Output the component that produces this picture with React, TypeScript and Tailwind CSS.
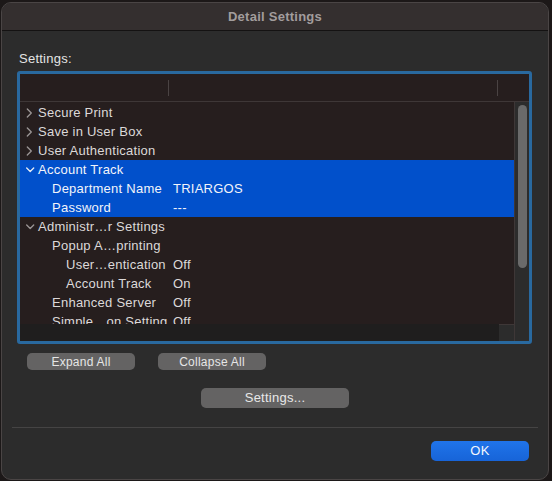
import React from "react";

type Row = {
  level: 0 | 1 | 2;
  label: string;
  value?: string;
  chev?: "right" | "down";
  sel?: boolean;
};

const rows: Row[] = [
  { level: 0, label: "Secure Print", chev: "right" },
  { level: 0, label: "Save in User Box", chev: "right" },
  { level: 0, label: "User Authentication", chev: "right" },
  { level: 0, label: "Account Track", chev: "down", sel: true },
  { level: 1, label: "Department Name", value: "TRIARGOS", sel: true },
  { level: 1, label: "Password", value: "---", sel: true },
  { level: 0, label: "Administr…r Settings", chev: "down" },
  { level: 1, label: "Popup A…printing" },
  { level: 2, label: "User…entication", value: "Off" },
  { level: 2, label: "Account Track", value: "On" },
  { level: 1, label: "Enhanced Server", value: "Off" },
  { level: 1, label: "Simple…on Setting", value: "Off" },
];

function Chevron({ dir, sel }: { dir: "right" | "down"; sel?: boolean }) {
  const color = sel ? "#e8ecf5" : "#9b9696";
  if (dir === "right") {
    return (
      <svg width="12" height="10" viewBox="0 0 12 10">
        <path d="M1.3 1 L5.3 5 L1.3 9" fill="none" stroke={color} strokeWidth="1.3" strokeLinecap="round" strokeLinejoin="round" />
      </svg>
    );
  }
  return (
    <svg width="12" height="10" viewBox="0 0 12 10">
      <path d="M0.7 3 L4.2 6.5 L7.7 3" fill="none" stroke={color} strokeWidth="1.3" strokeLinecap="round" strokeLinejoin="round" />
    </svg>
  );
}

function TreeRow({ r }: { r: Row }) {
  const pad = r.level === 0 ? "pl-[6px]" : r.level === 1 ? "pl-[32px]" : "pl-[46px]";
  return (
    <div className={`flex h-[19px] shrink-0 items-center ${r.sel ? "bg-[#0150cb] text-[#f2f4fa]" : "text-[#dcd9d9]"}`}>
      <div className={`flex w-[153px] shrink-0 items-center whitespace-nowrap ${pad}`}>
        {r.chev && (
          <span className="flex w-[12px] shrink-0 items-center">
            <Chevron dir={r.chev} sel={r.sel} />
          </span>
        )}
        <span>{r.label}</span>
      </div>
      {r.value && <span className="whitespace-nowrap">{r.value}</span>}
    </div>
  );
}

export default function App() {
  return (
    <div
      className="h-[481px] w-[552px] overflow-hidden bg-[#1c1818] pl-[1px] pt-[2px] text-[13px] tracking-[0.25px]"
      style={{ fontFamily: '"Liberation Sans", Arial, sans-serif' }}
    >
      <div className="flex h-[478px] w-[548px] flex-col overflow-hidden rounded-[10px] border border-[#4a4545] bg-[#2c2c2c]">
        {/* title bar */}
        <div className="flex h-[28px] shrink-0 items-center justify-center border-b border-[#141212] bg-[#342f2f] font-bold text-[#a29d9d]">
          Detail Settings
        </div>

        {/* body */}
        <div className="flex flex-col px-[15px] pt-[20px]">
          <div className="h-[16px] pl-[2px] leading-[16px] text-[#e4e4e4]">Settings:</div>

          <div className="mt-[4px] flex h-[273px] w-[515px] flex-col overflow-hidden rounded-[3px] border-[3px] border-[#29699f] bg-[#261e1e]">
            {/* header */}
            <div className="flex h-[28px] shrink-0 items-center border-b border-[#3e3737] bg-[#261e1e]">
              <div className="w-[148px] shrink-0" />
              <div className="h-[16px] w-px shrink-0 bg-[#4a4343]" />
              <div className="w-[328px] shrink-0" />
              <div className="h-[16px] w-px shrink-0 bg-[#4a4343]" />
            </div>

            {/* content */}
            <div className="flex h-[222px] shrink-0">
              <div className="flex w-[495px] shrink-0 flex-col overflow-hidden border-r border-[#3e3737] bg-[#261e1e] pt-[1px]">
                {rows.map((r, i) => (
                  <TreeRow key={i} r={r} />
                ))}
              </div>
              <div className="flex flex-1 justify-center bg-[#2c2c2c] pt-[3px]">
                <div className="h-[163px] w-[9px] rounded-full bg-[#6a6a6a]" />
              </div>
            </div>

            {/* bottom strip */}
            <div className="flex flex-1">
              <div className="w-[479px] shrink-0 bg-[#1f1e1e]" />
              <div className="w-[16px] shrink-0 border-r border-t border-[#3e3737] bg-[#2c2c2c]" />
              <div className="flex-1 bg-[#2c2c2c]" />
            </div>
          </div>

          {/* expand / collapse */}
          <div className="mt-[9px] flex gap-[23px] pl-[10px]">
            <button className="flex h-[17px] w-[108px] items-center justify-center rounded-[5px] bg-[#646363] text-[12px] text-[#e6e6e6]">
              Expand All
            </button>
            <button className="flex h-[17px] w-[108px] items-center justify-center rounded-[5px] bg-[#646363] text-[12px] text-[#e6e6e6]">
              Collapse All
            </button>
          </div>

          {/* settings button */}
          <div className="mt-[18px] flex justify-center">
            <button className="flex h-[20px] w-[148px] items-center justify-center rounded-[5px] bg-[#646363] text-[#e8e8e8]">
              Settings...
            </button>
          </div>
        </div>

        {/* separator */}
        <div className="mx-[10px] mt-[19px] h-px bg-[#454444]" />

        {/* OK */}
        <div className="flex justify-end pr-[19px] pt-[13px]">
          <button className="flex h-[20px] w-[98px] items-center justify-center rounded-[5px] bg-gradient-to-b from-[#2074ea] to-[#1764d8] text-[#f4f7fd]">
            OK
          </button>
        </div>
      </div>
    </div>
  );
}
